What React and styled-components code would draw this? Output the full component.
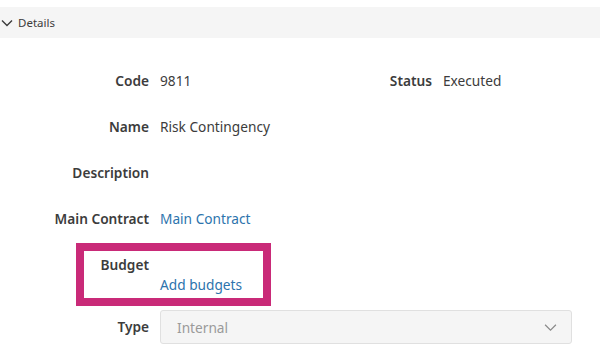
import React from "react";
import styled, { createGlobalStyle } from "styled-components";

const GlobalStyle = createGlobalStyle`
  body {
    margin: 0;
    background: #fff;
    font-family: "Noto Sans", "Open Sans", sans-serif;
    color: #3c3c3c;
  }
`;

const Panel = styled.section`
  width: 600px;
  height: 352px;
  padding-top: 7px;
  box-sizing: border-box;
  overflow: hidden;
`;

const Header = styled.div`
  display: flex;
  align-items: center;
  gap: 5px;
  height: 31px;
  padding-left: 1px;
  background: #f5f5f5;
  font-size: 11.5px;
  color: #3c3c3c;
`;

const Form = styled.div`
  display: flex;
  flex-direction: column;
  padding-top: 33px;
`;

const Row = styled.div`
  display: grid;
  grid-template-columns: ${(p) => p.$cols || "1fr"};
  height: ${(p) => p.$h || 46}px;
`;

const Field = styled.div`
  display: grid;
  grid-template-columns: ${(p) => p.$labelWidth || 149}px 1fr;
  grid-auto-rows: 20px;
  align-content: start;
  column-gap: 11px;
  row-gap: ${(p) => p.$rowGap || 0}px;
  align-items: start;
  position: relative;
`;

const Label = styled.div`
  text-align: right;
  font-size: 13.7px;
  font-weight: 600;
  line-height: 20px;
  color: #3c3c3c;
`;

const Value = styled.div`
  font-size: 13.7px;
  line-height: 20px;
  color: ${(p) => (p.$link ? "#2d74ad" : "#3c3c3c")};
  grid-row: ${(p) => (p.$below ? 2 : 1)};
  grid-column: 2;
`;

const Highlight = styled.div`
  position: absolute;
  left: 76px;
  top: -12px;
  width: 195px;
  height: 63px;
  box-sizing: border-box;
  border: 8px solid #c92a78;
  pointer-events: none;
`;

const Select = styled.div`
  display: flex;
  align-items: center;
  justify-content: space-between;
  width: 412px;
  height: 34px;
  box-sizing: border-box;
  margin-top: -7px;
  padding: 0 14px 0 16px;
  background: #f5f5f5;
  border: 1px solid #e0e0e0;
  border-radius: 3px;
  font-size: 13.7px;
  color: #9a9a9a;
`;

const Chevron = ({ size = 12, color = "#3c3c3c", width = 1.4 }) => (
  <svg width={size} height={size} viewBox="0 0 12 12" fill="none">
    <path d="M1 3.5 L6 8.5 L11 3.5" stroke={color} strokeWidth={width} />
  </svg>
);

export default function App() {
  return (
    <>
      <GlobalStyle />
      <Panel>
        <Header>
          <Chevron />
          <span>Details</span>
        </Header>
        <Form>
          <Row $cols="283px 1fr">
            <Field>
              <Label>Code</Label>
              <Value>9811</Value>
            </Field>
            <Field>
              <Label>Status</Label>
              <Value>Executed</Value>
            </Field>
          </Row>
          <Row>
            <Field>
              <Label>Name</Label>
              <Value>Risk Contingency</Value>
            </Field>
          </Row>
          <Row>
            <Field>
              <Label>Description</Label>
              <Value />
            </Field>
          </Row>
          <Row>
            <Field>
              <Label>Main Contract</Label>
              <Value $link>Main Contract</Value>
            </Field>
          </Row>
          <Row $h={62}>
            <Field>
              <Label>Budget</Label>
              <Value $link $below>Add budgets</Value>
              <Highlight />
            </Field>
          </Row>
          <Row>
            <Field>
              <Label>Type</Label>
              <Select>
                <span>Internal</span>
                <Chevron color="#8a8a8a" width={1.1} size={13} />
              </Select>
            </Field>
          </Row>
        </Form>
      </Panel>
    </>
  );
}
